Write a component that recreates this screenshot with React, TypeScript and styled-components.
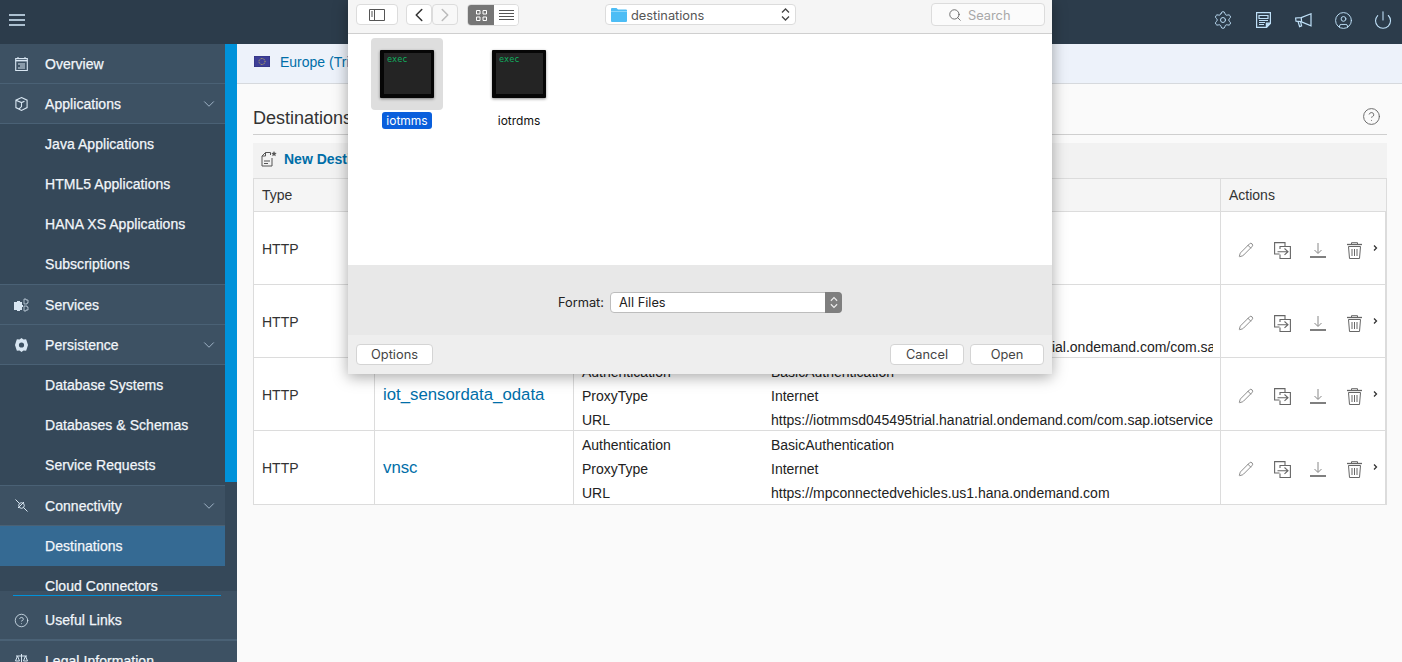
import React from 'react';
import styled, { createGlobalStyle } from 'styled-components';
import { ChevronDown, ChevronLeft, ChevronRight, CircleHelp, CircleUser, Pencil, Power, Search, Settings } from 'lucide-react';

const GlobalStyle = createGlobalStyle`
    html, body {
        margin: 0;
        height: 100%;
        overflow: hidden;
        background: #fafafa;
        font-family: 'Liberation Sans', Arial, sans-serif;
    }
    * { box-sizing: border-box; }
`;

type IconProps = { size?: number };

const MenuIcon = () => (
    <svg width="16" height="12" viewBox="0 0 16 12" stroke="#d6ebfd" strokeWidth="1.700">
        <path d="M0 1h16M0 6h16M0 11h16" />
    </svg>
);

const LogIcon = () => (
    <svg width="15" height="16" viewBox="0 0 15 16" fill="none" stroke="#bfe0f8" strokeWidth="1.200">
        <path d="M.6.6h13.800v10.600l-4 4.200H.6z" />
        <path d="M3 3.500h9v3H3zM3 8.500h9M3 10.500h6M3 12.500h5" />
        <path d="M10.400 15.400v-4.200h4z" fill="#bfe0f8" />
    </svg>
);

const MegaphoneIcon = () => (
    <svg width="17" height="15" viewBox="0 0 17 15" fill="none" stroke="#bfe0f8" strokeWidth="1.200">
        <path d="M16 .8v12L6 8.600 1 8.200.6 5l5.600-.4z" />
        <path d="M6.200 4.600l.4 4M3 8.400l1.600 5.200 2-.8L5.600 8.600" />
    </svg>
);

const OverviewIcon = () => (
    <svg width="13" height="14" viewBox="0 0 13 14" fill="none" stroke="#d8e6f2" strokeWidth="1.100">
        <path d="M.7 1.500h11.600v12H.7z" />
        <path d="M.7 3.600h11.600" strokeWidth="1.600" />
        <path d="M3 1V0M10 1V0M3 7h7M5 9h5M3 11h7" />
    </svg>
);

const AppsIcon = () => (
    <svg width="13" height="14" viewBox="0 0 13 14" fill="none" stroke="#d8e6f2" strokeWidth="1.100">
        <path d="M6.500.6l5.600 2.600v7.400l-5.600 2.800-5.600-2.800V3.200zM.9 3.200l5.600 2.400 3-1.400M6.500 5.600v4l-2.600 2.600" />
    </svg>
);

const ServicesIcon = () => (
    <svg width="15" height="14" viewBox="0 0 15 14" fill="#d8e6f2">
        <path d="M0 4h3v-1h3v1h2v3h1v2h-1v3h-2v1h-3v-1h-3z" />
        <path d="M10 1h2v1h2v3h-1v1h-3zM10 8h3v1h1v3h-2v1h-2z" fill="none" stroke="#d8e6f2" strokeWidth=".7" />
    </svg>
);

const PersistenceIcon = () => (
    <svg width="13" height="14" viewBox="0 0 13 14" fill="#d8e6f2">
        <path fillRule="evenodd" d="M6.500 0l2 1.400 2.600-.2.8 2.400L13 7l-1.100 3.400-.8 2.400-2.600-.2-2 1.400-2-1.400-2.600.2-.8-2.400L0 7l1.100-3.400.8-2.400 2.600.2zM6.500 4.400a2.600 2.600 0 100 5.200 2.600 2.600 0 000-5.200z" />
    </svg>
);

const ConnectivityIcon = () => (
    <svg width="13" height="13" viewBox="0 0 13 13" fill="none" stroke="#d8e6f2" strokeWidth="1">
        <path d="M.5.5l4 4M8.500 8.500l4 4" />
        <circle cx="6.500" cy="6.500" r="2.800" />
        <path d="M3 9l6-6" />
    </svg>
);

const LegalIcon = () => (
    <svg width="13" height="14" viewBox="0 0 13 14" fill="none" stroke="#d8e6f2" strokeWidth="1">
        <path d="M6.500 0v13M3 13h7M1 2h11M2.500 2L.5 7h4zM10.500 2l-2 5h4z" />
    </svg>
);

const FlagIcon = () => (
    <svg width="16" height="11" viewBox="0 0 16 11">
        <rect width="16" height="11" fill="#3e3f97" stroke="#2a2b70" strokeWidth=".6" />
        <circle cx="8" cy="5.500" r="3" fill="none" stroke="#e8d84a" strokeWidth=".8" strokeDasharray=".8 .8" />
    </svg>
);

const NewFileIcon = () => (
    <svg width="16" height="16" viewBox="0 0 16 16" fill="none" stroke="#555" strokeWidth="1">
        <path d="M4.500 1.500h5v2.500M1 5l3.500-3.500V5zM1 5v10h10V7M3 10h6M3 12.500h4" />
        <path d="M13 0l.8 1.800 1.900.2-1.400 1.300.4 1.900-1.700-1-1.700 1 .4-1.900L10.300 2l1.900-.2z" fill="#555" stroke="none" />
    </svg>
);

const ImportIcon = () => (
    <svg width="17" height="17" viewBox="0 0 17 17" fill="none" stroke="#666" strokeWidth="1.100">
        <path d="M5.500 12H.6V.6H11V4.500" />
        <path d="M6 7V4.500h10.400v12H6V12.500" />
        <path d="M3.500 9.700h10.500M10.500 6.500l3.500 3.200-3.500 3.200" />
    </svg>
);

const DownloadIcon = () => (
    <svg width="16" height="16" viewBox="0 0 16 16" fill="none" stroke="#888" strokeWidth="1">
        <path d="M8 1v10M4.500 8L8 11.500 11.500 8" />
        <path d="M0 15h16" stroke="#555" strokeWidth="1.500" />
    </svg>
);

const TrashIcon = () => (
    <svg width="15" height="17" viewBox="0 0 15 17" fill="none" stroke="#666" strokeWidth="1">
        <path d="M0 2.500h15" strokeWidth="1.300" />
        <path d="M4.500 2.500V.7h6v1.800" />
        <path d="M1.500 4.500h12L12.500 16.500h-10zM5 7v7M7.500 7v7M10 7v7" />
    </svg>
);

const SidebarToggleIcon = () => (
    <svg width="16" height="12" viewBox="0 0 16 12" fill="none" stroke="#555" strokeWidth="1">
        <path d="M.5.500h15v11H.5zM5.500.500v11M2 3h2M2 5h2M2 7h2" />
    </svg>
);

const GridIcon = () => (
    <svg width="11" height="11" viewBox="0 0 11 11" fill="none" stroke="#fff" strokeWidth="1">
        <path d="M.5.500h3.500V4H.500zM7 .500h3.500V4H7zM.5 7h3.500v3.500H.500zM7 7h3.500v3.500H7z" />
    </svg>
);

const ListIcon = () => (
    <svg width="15" height="11" viewBox="0 0 15 11" stroke="#555" strokeWidth="1">
        <path d="M0 .500h15M0 3.500h15M0 6.500h15M0 9.500h15" />
    </svg>
);

const FolderIcon = () => (
    <svg width="16" height="15" viewBox="0 0 16 15">
        <path d="M0 2a1 1 0 011-1h4.500l1.500 1.500h8a1 1 0 011 1V14a1 1 0 01-1 1H1a1 1 0 01-1-1z" fill="#4dbdf5" />
        <path d="M0 4h16v1H0z" fill="#8ad6fa" />
    </svg>
);

const UpDownIcon = ({ size = 9 }: IconProps) => (
    <svg width={size} height="13" viewBox="0 0 9 13" fill="none" stroke="currentColor" strokeWidth="1.300">
        <path d="M1 4.500l3.500-3.500L8 4.500M1 8.500L4.500 12 8 8.500" />
    </svg>
);

const SmallChevron = () => (
    <svg width="5" height="6" viewBox="0 0 5 6" fill="none" stroke="#333" strokeWidth="1.300">
        <path d="M1 .5L3.500 3 1 5.500" />
    </svg>
);

const destinations = [
    { name: '', url: '' },
    { name: '', url: 'https://iotmmssensordata.d045495trial.hanatrial.ondemand.com/com.sap.iotservices' },
    { name: 'iot_sensordata_odata', url: 'https://iotmmsd045495trial.hanatrial.ondemand.com/com.sap.iotservices' },
    { name: 'vnsc', url: 'https://mpconnectedvehicles.us1.hana.ondemand.com' },
];

const App: React.FC = () => {
    return (
        <Page>
            <GlobalStyle />
            <Header>
                <MenuButton><MenuIcon /></MenuButton>
                <HeaderActions>
                    <HeaderAction><Settings size={20} strokeWidth={1.15} /></HeaderAction>
                    <HeaderAction><LogIcon /></HeaderAction>
                    <HeaderAction><MegaphoneIcon /></HeaderAction>
                    <HeaderAction><CircleUser size={19} strokeWidth={1.2} /></HeaderAction>
                    <HeaderAction><Power size={20} strokeWidth={1.3} /></HeaderAction>
                </HeaderActions>
            </Header>
            <Body>
                <Sidebar>
                    <NavArea>
                        <NavList>
                            <NavItem><NavIcon><OverviewIcon /></NavIcon>Overview</NavItem>
                            <NavItem>
                                <NavIcon><AppsIcon /></NavIcon>Applications
                                <NavChevron><ChevronDown size={18} strokeWidth={1.2} /></NavChevron>
                            </NavItem>
                            <SubList>
                                <SubItem>Java Applications</SubItem>
                                <SubItem>HTML5 Applications</SubItem>
                                <SubItem>HANA XS Applications</SubItem>
                                <SubItem>Subscriptions</SubItem>
                            </SubList>
                            <NavItem><NavIcon><ServicesIcon /></NavIcon>Services</NavItem>
                            <NavItem>
                                <NavIcon><PersistenceIcon /></NavIcon>Persistence
                                <NavChevron><ChevronDown size={18} strokeWidth={1.2} /></NavChevron>
                            </NavItem>
                            <SubList>
                                <SubItem>Database Systems</SubItem>
                                <SubItem>Databases &amp; Schemas</SubItem>
                                <SubItem>Service Requests</SubItem>
                            </SubList>
                            <NavItem>
                                <NavIcon><ConnectivityIcon /></NavIcon>Connectivity
                                <NavChevron><ChevronDown size={18} strokeWidth={1.2} /></NavChevron>
                            </NavItem>
                            <SubItem $active>Destinations</SubItem>
                            <SubItem>Cloud Connectors</SubItem>
                        </NavList>
                        <ScrollTrack><ScrollThumb /></ScrollTrack>
                    </NavArea>
                    <SideFooter>
                        <FooterRule />
                        <NavItem $thick><NavIcon><CircleHelp size={15} strokeWidth={1.3} /></NavIcon>Useful Links</NavItem>
                        <NavItem><NavIcon><LegalIcon /></NavIcon>Legal Information</NavItem>
                    </SideFooter>
                </Sidebar>
                <Main>
                    <RegionBar><FlagIcon /><RegionName>Europe (Trial)</RegionName></RegionBar>
                    <Content>
                        <TitleRow>
                            <PageTitle>Destinations</PageTitle>
                            <HelpIcon><CircleHelp size={19} strokeWidth={1.2} /></HelpIcon>
                        </TitleRow>
                        <Toolbar><NewFileIcon /><NewLink>New Destination</NewLink></Toolbar>
                        <Table>
                            <HeadRow>
                                <HeadCell>Type</HeadCell>
                                <HeadCell>Name</HeadCell>
                                <HeadCell>Additional Properties</HeadCell>
                                <HeadCell>Actions</HeadCell>
                            </HeadRow>
                            {destinations.map((d, i) => (
                                <Row key={i}>
                                    <TypeCell>HTTP</TypeCell>
                                    <NameCell>{d.name}</NameCell>
                                    <PropsCell>
                                        <PropKey>Authentication</PropKey><PropValue>BasicAuthentication</PropValue>
                                        <PropKey>ProxyType</PropKey><PropValue>Internet</PropValue>
                                        <PropKey>URL</PropKey><PropValue>{d.url}</PropValue>
                                    </PropsCell>
                                    <ActionsCell>
                                        <ActionSlot><Pencil size={16} strokeWidth={1.2} color="#6f6f6f" /></ActionSlot>
                                        <ActionSlot><ImportIcon /></ActionSlot>
                                        <ActionSlot><DownloadIcon /></ActionSlot>
                                        <ActionSlot><TrashIcon /></ActionSlot>
                                        <ExpandSlot><SmallChevron /></ExpandSlot>
                                    </ActionsCell>
                                </Row>
                            ))}
                        </Table>
                    </Content>
                </Main>
            </Body>

            <Dialog>
                <DialogBar>
                    <BarButton $width={42}><SidebarToggleIcon /></BarButton>
                    <NavPair>
                        <PairButton><ChevronLeft size={22} strokeWidth={1.7} color="#333" /></PairButton>
                        <PairButton $dim><ChevronRight size={22} strokeWidth={1.7} color="#bbb" /></PairButton>
                    </NavPair>
                    <ViewSwitch>
                        <ViewOption $on><GridIcon /></ViewOption>
                        <ViewOption><ListIcon /></ViewOption>
                    </ViewSwitch>
                    <PathSelect>
                        <FolderIcon /><PathName>destinations</PathName>
                        <PathArrows><UpDownIcon /></PathArrows>
                    </PathSelect>
                    <SearchField><Search size={14} strokeWidth={1.4} color="#555" /><SearchHint>Search</SearchHint></SearchField>
                </DialogBar>
                <FileArea>
                    <FileTile>
                        <FileThumb $selected><ExecIcon><ExecLabel>exec</ExecLabel></ExecIcon></FileThumb>
                        <FileName $selected>iotmms</FileName>
                    </FileTile>
                    <FileTile>
                        <FileThumb><ExecIcon><ExecLabel>exec</ExecLabel></ExecIcon></FileThumb>
                        <FileName>iotrdms</FileName>
                    </FileTile>
                </FileArea>
                <FormatPanel>
                    <FormatLabel>Format:</FormatLabel>
                    <FormatSelect>
                        All Files
                        <FormatArrows><UpDownIcon size={8} /></FormatArrows>
                    </FormatSelect>
                </FormatPanel>
                <DialogFooter>
                    <FooterButton $width={77}>Options</FooterButton>
                    <FooterSpacer />
                    <FooterButton $width={74}>Cancel</FooterButton>
                    <FooterButton $width={74}>Open</FooterButton>
                </DialogFooter>
            </Dialog>
        </Page>
    );
};

export default App;


const Page = styled.div`
    position: relative;
    width: 1402px;
    height: 662px;
    overflow: hidden;
    display: flex;
    flex-direction: column;
`;

const Header = styled.header`
    height: 44px;
    flex: none;
    background: #2c3c4b;
    display: flex;
    align-items: center;
    padding: 0 0 4px 9px;
`;

const MenuButton = styled.div`
    display: flex;
`;

const HeaderActions = styled.div`
    margin-left: auto;
    margin-right: -1px;
    display: flex;
`;

const HeaderAction = styled.div`
    width: 40px;
    height: 40px;
    display: flex;
    align-items: center;
    justify-content: center;
    color: #bfe0f8;
`;

const Body = styled.div`
    flex: 1;
    display: flex;
    min-height: 0;
`;

const Sidebar = styled.aside`
    width: 237px;
    flex: none;
    display: flex;
    flex-direction: column;
    background: #354859;
    color: #f2f6fa;
    font-size: 14px;
    letter-spacing: 0.05px;
    -webkit-text-stroke: 0.25px #f2f6fa;
`;

const NavArea = styled.div`
    height: 547px;
    flex: none;
    display: flex;
    overflow: hidden;
`;

const NavList = styled.nav`
    width: 225px;
    flex: none;
`;

const ScrollTrack = styled.div`
    width: 12px;
    flex: none;
`;

const ScrollThumb = styled.div`
    height: 438px;
    background: #0092da;
`;

const NavItem = styled.div<{ $thick?: boolean }>`
    height: 40px;
    display: flex;
    align-items: center;
    background: #3d5163;
    border-bottom: ${({ $thick }) => ($thick ? '2px' : '1px')} solid #4a6175;
`;

const NavIcon = styled.span`
    width: 45px;
    flex: none;
    display: flex;
    justify-content: center;
    padding-right: 3px;
    color: #d8e6f2;
`;

const NavChevron = styled.span`
    margin-left: auto;
    margin-right: 7px;
    display: flex;
    color: #a9bdd0;
`;

const SubList = styled.div`
    border-bottom: 1px solid #4a6175;
`;

const SubItem = styled.div<{ $active?: boolean }>`
    height: 40px;
    display: flex;
    align-items: center;
    padding-left: 45px;
    background: ${({ $active }) => ($active ? '#356a93' : 'transparent')};
`;

const SideFooter = styled.div`
    flex: 1;
    background: #3d5163;
    padding-top: 4px;
    overflow: hidden;
`;

const FooterRule = styled.div`
    height: 1px;
    margin: 0 16px 5px 13px;
    background: #0092da;
`;

const Main = styled.main`
    flex: 1;
    min-width: 0;
    background: #fafafa;
`;

const RegionBar = styled.div`
    height: 40px;
    display: flex;
    align-items: center;
    gap: 10px;
    padding: 0 0 4px 17px;
    background: #edf2fa;
    border-bottom: 1px solid #d6d9dd;
`;

const RegionName = styled.span`
    font-size: 14px;
    color: #006ea8;
`;

const Content = styled.div`
    padding: 0 15px 0 16px;
`;

const TitleRow = styled.div`
    height: 51px;
    padding-top: 18px;
    display: flex;
    align-items: center;
    justify-content: space-between;
    border-bottom: 1px solid #cfcfcf;
`;

const PageTitle = styled.h1`
    margin: 0;
    font-size: 18px;
    font-weight: 400;
    color: #333;
`;

const HelpIcon = styled.span`
    display: flex;
    margin: 0 6px 4px 0;
    color: #666;
`;

const Toolbar = styled.div`
    height: 35px;
    margin-top: 8px;
    display: flex;
    align-items: center;
    gap: 7px;
    padding: 0 0 3px 8px;
    background: #f2f2f2;
`;

const NewLink = styled.span`
    font-size: 14px;
    font-weight: 700;
    color: #006ea8;
`;

const Table = styled.div`
    border: 1px solid #dcdcdc;
    font-size: 14px;
    color: #333;
`;

const HeadRow = styled.div`
    height: 33px;
    display: grid;
    grid-template-columns: 120px 199px 647px 1fr;
    background: #f5f5f5;
    border-bottom: 1px solid #dcdcdc;
`;

const HeadCell = styled.div`
    display: flex;
    align-items: center;
    padding-left: 8px;
    & + & {
        border-left: 1px solid #dcdcdc;
    }
`;

const Row = styled.div`
    height: 73px;
    display: grid;
    grid-template-columns: 120px 199px 647px 1fr;
    background: #fff;
    border-bottom: 1px solid #dcdcdc;
    border-right: 1px solid #dcdcdc;
    &:last-child {
        border-bottom: none;
    }
`;

const TypeCell = styled.div`
    display: flex;
    align-items: center;
    padding-left: 8px;
`;

const NameCell = styled.div`
    display: flex;
    align-items: center;
    padding-left: 8px;
    border-left: 1px solid #dcdcdc;
    font-size: 16.8px;
    color: #006ea8;
`;

const PropsCell = styled.div`
    display: grid;
    grid-template-columns: 189px minmax(0, 1fr);
    grid-auto-rows: 24px;
    align-content: center;
    padding: 2px 7px 0 8px;
    border-left: 1px solid #dcdcdc;
    color: #222;
    line-height: 24px;
`;

const PropKey = styled.span``;

const PropValue = styled.span`
    white-space: nowrap;
    overflow: hidden;
`;

const ActionsCell = styled.div`
    display: flex;
    align-items: center;
    padding: 2px 0 0 7px;
    border-left: 1px solid #dcdcdc;
    color: #666;
`;

const ActionSlot = styled.span`
    width: 36px;
    display: flex;
    justify-content: center;
`;

const ExpandSlot = styled.span`
    display: flex;
    margin: -5px 0 0 1px;
`;

const Dialog = styled.div`
    position: absolute;
    left: 348px;
    top: 0;
    width: 704px;
    height: 374px;
    display: flex;
    flex-direction: column;
    background: #fff;
    box-shadow: 0 3px 14px rgba(0, 0, 0, 0.35);
    font-family: Inter, 'Liberation Sans', sans-serif;
    font-size: 12.8px;
    color: #444;
`;

const DialogBar = styled.div`
    height: 34px;
    flex: none;
    display: flex;
    align-items: flex-start;
    padding: 4px 0 0 8px;
    background: #f5f5f5;
    border-bottom: 1px solid #cfcfcf;
`;

const BarButton = styled.div<{ $width: number }>`
    width: ${({ $width }) => $width}px;
    height: 21px;
    display: flex;
    align-items: center;
    justify-content: center;
    background: #fff;
    border: 1px solid #dcdcdc;
    border-radius: 4px;
`;

const NavPair = styled.div`
    margin-left: 8px;
    display: flex;
`;

const PairButton = styled.div<{ $dim?: boolean }>`
    width: 26px;
    height: 21px;
    display: flex;
    align-items: center;
    justify-content: center;
    background: ${({ $dim }) => ($dim ? '#f8f8f8' : '#fff')};
    border: 1px solid #dcdcdc;
    border-radius: 4px;
`;

const ViewSwitch = styled.div`
    width: 52px;
    margin-left: 9px;
    display: flex;
    border: 1px solid #dcdcdc;
    border-radius: 4px;
    overflow: hidden;
`;

const ViewOption = styled.div<{ $on?: boolean }>`
    width: ${({ $on }) => ($on ? '26px' : '24px')};
    height: 20px;
    display: flex;
    align-items: center;
    justify-content: center;
    background: ${({ $on }) => ($on ? '#767676' : '#fff')};
`;

const PathSelect = styled.div`
    width: 191px;
    height: 21px;
    margin-left: 86px;
    display: flex;
    align-items: center;
    gap: 4px;
    padding: 0 5px 0 5px;
    background: #fff;
    border: 1px solid #dcdcdc;
    border-radius: 4px;
`;

const PathName = styled.span`
    flex: 1;
    padding-top: 1px;
    color: #555;
`;

const PathArrows = styled.span`
    display: flex;
    color: #444;
`;

const SearchField = styled.div`
    width: 114px;
    height: 23px;
    margin: -1px 0 0 135px;
    display: flex;
    align-items: center;
    gap: 6px;
    padding-left: 16px;
    background: #fbfbfb;
    border: 1px solid #dcdcdc;
    border-radius: 4px;
`;

const SearchHint = styled.span`
    padding-top: 1px;
    color: #a8a8a8;
`;

const FileArea = styled.div`
    flex: 1;
    display: flex;
    gap: 40px;
    padding: 4px 0 0 23px;
    background: #fff;
`;

const FileTile = styled.div`
    width: 72px;
    display: flex;
    flex-direction: column;
    align-items: center;
`;

const FileThumb = styled.div<{ $selected?: boolean }>`
    width: 72px;
    height: 72px;
    display: flex;
    align-items: center;
    justify-content: center;
    border-radius: 4px;
    background: ${({ $selected }) => ($selected ? '#dedede' : 'transparent')};
`;

const ExecIcon = styled.div`
    width: 54px;
    height: 48px;
    padding: 1px 0 0 3px;
    background: #242424;
    border: 3px solid #060606;
    border-bottom-width: 4px;
    border-left-width: 4px;
    border-radius: 1px;
    box-shadow: 0 1px 3px rgba(0, 0, 0, 0.45);
`;

const ExecLabel = styled.span`
    display: block;
    font-family: 'DejaVu Sans Mono', 'Liberation Mono', monospace;
    font-size: 8.5px;
    line-height: 10px;
    color: #10b060;
`;

const FileName = styled.span<{ $selected?: boolean }>`
    margin-top: 2px;
    padding: 0 4px;
    font-size: 12px;
    line-height: 17px;
    border-radius: 3px;
    color: ${({ $selected }) => ($selected ? '#fff' : '#111')};
    background: ${({ $selected }) => ($selected ? '#0a5fdc' : 'transparent')};
`;

const FormatPanel = styled.div`
    height: 70px;
    flex: none;
    display: flex;
    align-items: center;
    justify-content: center;
    gap: 6px;
    padding-top: 5px;
    background: #e8e8e8;
`;

const FormatLabel = styled.span`
    color: #222;
`;

const FormatSelect = styled.div`
    position: relative;
    width: 232px;
    height: 21px;
    display: flex;
    align-items: center;
    padding-left: 8px;
    background: #fff;
    border: 1px solid #bdbdbd;
    border-radius: 4px;
    color: #222;
`;

const FormatArrows = styled.span`
    position: absolute;
    right: -1px;
    top: -1px;
    width: 17px;
    height: 21px;
    display: flex;
    align-items: center;
    justify-content: center;
    background: #7f7f7f;
    border-radius: 0 4px 4px 0;
    color: #eee;
`;

const DialogFooter = styled.div`
    height: 39px;
    flex: none;
    display: flex;
    align-items: center;
    gap: 6px;
    padding: 0 8px;
    background: #eeeeee;
`;

const FooterSpacer = styled.div`
    flex: 1;
`;

const FooterButton = styled.div<{ $width: number }>`
    width: ${({ $width }) => $width}px;
    height: 21px;
    display: flex;
    align-items: center;
    justify-content: center;
    background: #fff;
    border: 1px solid #d4d4d4;
    border-radius: 4px;
    color: #444;
`;
